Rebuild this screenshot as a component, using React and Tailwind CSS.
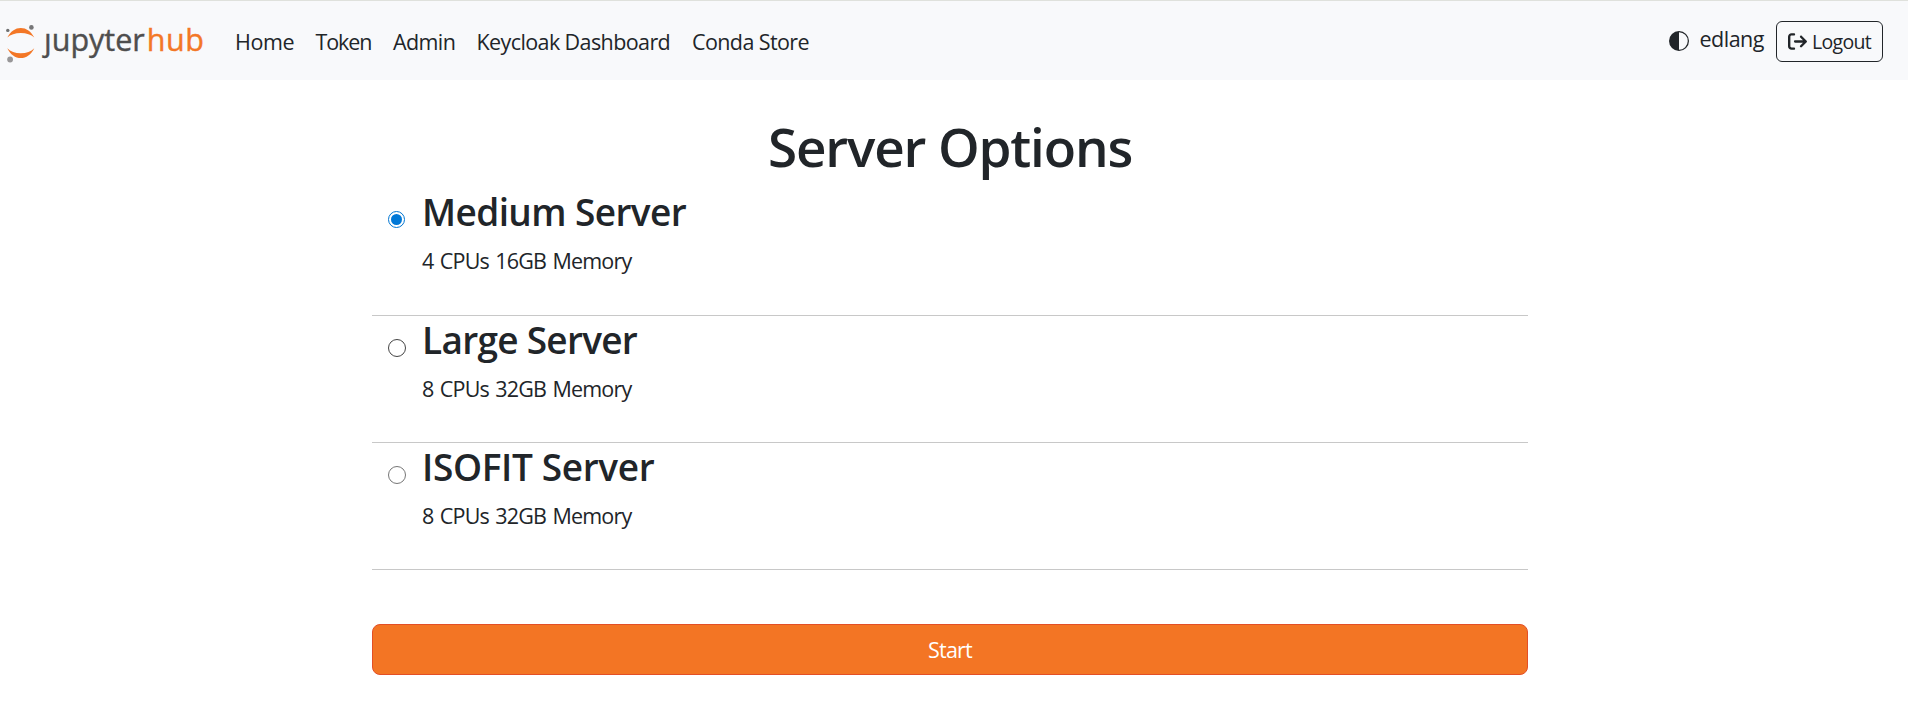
import { useState } from "react";
import { FaArrowRightFromBracket } from "react-icons/fa6";

const navLinks = [
  { label: "Home", className: "w-[80.5px] tracking-[-0.4px]" },
  { label: "Token", className: "w-[77.5px] tracking-[-1.1px]" },
  { label: "Admin", className: "w-[83.5px] tracking-[-0.6px]" },
  { label: "Keycloak Dashboard", className: "w-[215.5px] tracking-[-0.6px]" },
  { label: "Conda Store", className: "tracking-[-0.6px]" },
];

const servers = [
  { name: "Medium Server", spec: "4 CPUs 16GB Memory", row: "h-[128px]", title: "tracking-[-0.6px]", ring: "" },
  { name: "Large Server", spec: "8 CPUs 32GB Memory", row: "h-[127px]", title: "tracking-[-0.72px]", ring: "border-[#444444]" },
  { name: "ISOFIT Server", spec: "8 CPUs 32GB Memory", row: "h-[127px]", title: "tracking-[-0.36px]", ring: "border-[#767676]" },
];

function Logo() {
  return (
    <a className="flex h-full w-[235px] shrink-0 items-start" aria-label="jupyterhub">
      <svg className="h-[79px] w-[44px] shrink-0" viewBox="0 1 44 79">
        <path d="M7.3 37.6C10.5 31.3 15.3 28 20.8 28s10.3 3.3 13.5 9.6C31 34.5 26.5 33 20.8 33S10.6 34.5 7.3 37.6Z" fill="#f37726" />
        <path d="M7.3 48.2C10.5 54.6 15.3 58 20.8 58s10.3-3.4 13.5-9.8C31 51.6 26.5 53.3 20.8 53.3S10.6 51.6 7.3 48.2Z" fill="#f37726" />
        <circle cx="7.8" cy="30.4" r="1.7" fill="#6f7070" />
        <circle cx="31.4" cy="27.4" r="2.3" fill="#767677" />
        <circle cx="10.1" cy="59.5" r="2.9" fill="#989798" />
      </svg>
      <span className="pt-[17px] text-[30.5px] leading-[42px] text-[#4e4e4e] [-webkit-text-stroke:0.4px_currentColor]">
        ȷupyter<span className="ml-[2px] tracking-[0.5px] text-[#f37726]">hub</span>
      </span>
    </a>
  );
}

function ServerOption({ server, checked, onSelect }) {
  return (
    <label className={`flex border-b border-[#c8c8c8] ${server.row}`}>
      <input type="radio" name="profile" className="sr-only" checked={checked} onChange={onSelect} />
      <span className="flex w-[50px] shrink-0 pt-[23px] pl-[16px]">
        {checked ? (
          <span className="flex size-[17px] items-center justify-center rounded-full border border-[#0075d1]">
            <span className="size-[11px] rounded-full bg-[#0078d7]" />
          </span>
        ) : (
          <span className={`size-[18px] rounded-full border bg-white ${server.ring}`} />
        )}
      </span>
      <span className="flex flex-col">
        <span className={`pt-px text-[37px] leading-[46px] font-semibold ${server.title}`}>{server.name}</span>
        <span className="mt-[12px] text-[21.5px] leading-[28px] tracking-[-0.8px] [word-spacing:1.5px]">{server.spec}</span>
      </span>
    </label>
  );
}

export default function App() {
  const [selected, setSelected] = useState(0);
  return (
    <div className="min-h-screen bg-white font-['Open_Sans',sans-serif] text-[#212529]">
      <header className="flex h-[80px] border-t border-[#dfe1dc] bg-[#f8f9fb]">
        <Logo />
        <nav className="flex pt-[26.5px] text-[21.5px] leading-[28px] whitespace-nowrap">
          {navLinks.map((link) => (
            <a key={link.label} className={link.className}>{link.label}</a>
          ))}
        </nav>
        <div className="ml-auto flex items-start pr-[25px]">
          <svg className="mt-[30px] size-[20px]" viewBox="0 0 16 16" fill="#212529">
            <path d="M8 15A7 7 0 1 0 8 1v14zm0 1A8 8 0 1 1 8 0a8 8 0 0 1 0 16z" />
          </svg>
          <span className="mt-[23.5px] ml-[11px] w-[76.5px] text-[21.5px] leading-[28px] tracking-[-0.5px]">edlang</span>
          <button className="mt-[20px] flex h-[41px] w-[107px] items-center rounded-[6px] border border-[#212529] pl-[11px] text-[19.5px] leading-[28px] tracking-[-0.7px]">
            <FaArrowRightFromBracket className="size-[19px] shrink-0" />
            <span className="ml-[5px]">Logout</span>
          </button>
        </div>
      </header>
      <main className="mx-auto flex w-[1156px] -translate-x-[4px] flex-col">
        <h1 className="pt-[37px] text-center text-[53px] leading-[60px] font-semibold tracking-[-1.15px]">
          Server Options
        </h1>
        <div className="mt-[11px]">
          {servers.map((server, i) => (
            <ServerOption key={server.name} server={server} checked={selected === i} onSelect={() => setSelected(i)} />
          ))}
        </div>
        <button className="mt-[54px] h-[51px] rounded-[8px] border border-[#e34f26] bg-[#f37524] text-[21.5px] leading-[28px] tracking-[-0.75px] text-white">
          Start
        </button>
      </main>
    </div>
  );
}
